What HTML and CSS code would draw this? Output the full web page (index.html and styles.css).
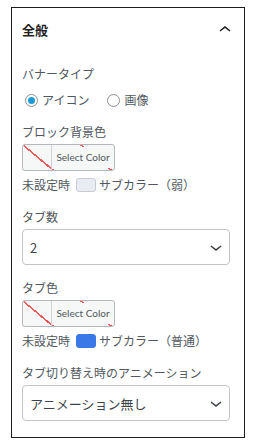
FILE: index.html
```html
<!DOCTYPE html>
<html>
<head>
    <title>全般</title>
    <link rel="stylesheet" href="styles.css">
</head>
<body>
    <div class="panel">
        <div class="panel-head">
            <span class="panel-title">全般</span>
            <svg class="chev" width="24" height="24" viewBox="0 0 24 24"><path d="M6.5 12.4L12 8l5.5 4.4-.9 1.2L12 10l-4.6 3.6z"/></svg>
        </div>

        <div class="panel-body">
            <div class="label">バナータイプ</div>
            <div class="radios">
                <label class="radio-item"><span class="radio checked"></span>アイコン</label>
                <label class="radio-item"><span class="radio"></span>画像</label>
            </div>

            <div class="label group">ブロック背景色</div>
            <button type="button" class="color-btn">
                <span class="color-swatch"></span>
                <span class="color-text">Select Color</span>
            </button>
            <div class="default-row">
                未設定時 <span class="mini-swatch light"></span> サブカラー（弱）
            </div>

            <div class="label group">タブ数</div>
            <div class="select">
                <span>2</span>
                <svg width="24" height="24" viewBox="0 0 24 24"><path d="M17.5 11.6L12 16l-5.5-4.4.9-1.2L12 14l4.6-3.6 1 1.2z"/></svg>
            </div>

            <div class="label group">タブ色</div>
            <button type="button" class="color-btn">
                <span class="color-swatch"></span>
                <span class="color-text">Select Color</span>
            </button>
            <div class="default-row">
                未設定時 <span class="mini-swatch blue"></span> サブカラー（普通）
            </div>

            <div class="label group">タブ切り替え時のアニメーション</div>
            <div class="select">
                <span>アニメーション無し</span>
                <svg width="24" height="24" viewBox="0 0 24 24"><path d="M17.5 11.6L12 16l-5.5-4.4.9-1.2L12 14l4.6-3.6 1 1.2z"/></svg>
            </div>
        </div>
    </div>
</body>
</html>
```

FILE: styles.css
```css
body {
    margin: 0;
    background: #fff;
    font-family: "Noto Sans CJK JP", "Noto Sans", sans-serif;
    font-size: 12px;
    color: #50575e;
}

.panel {
    margin: 7px 10px 0 11px;
    border: 1px solid #1e1e1e;
}

.panel-head {
    display: flex;
    align-items: center;
    justify-content: space-between;
    padding: 10px 7px 10px 10px;
}

.panel-title {
    font-size: 13px;
    font-weight: bold;
    line-height: 16px;
    color: #1e1e1e;
}

.chev {
    fill: #1e1e1e;
}

.panel-body {
    padding: 13px 14px 16px 10px;
}

.label {
    line-height: 18px;
}

.label.group {
    margin-top: 14px;
}

.radios {
    display: flex;
    margin-top: 8px;
    line-height: 18px;
}

.radio-item {
    display: flex;
    align-items: center;
    margin-right: 15px;
}

.radio {
    position: relative;
    width: 11px;
    height: 11px;
    margin: 0 4px 0 3px;
    border: 1px solid #8c8f94;
    border-radius: 50%;
}

.radio.checked::after {
    content: "";
    position: absolute;
    top: 2px;
    left: 2px;
    width: 7px;
    height: 7px;
    border-radius: 50%;
    background: #1e9bd7;
}

.color-btn {
    display: flex;
    width: 93px;
    height: 27px;
    margin-top: 3px;
    padding: 0;
    border: 1px solid #b4b7bb;
    border-radius: 3px;
    background-color: #f6f7f7;
    background-image: repeating-linear-gradient(40deg, transparent 0, transparent 18.4px, #ee5a5a 18.4px, #ee5a5a 20px, transparent 20px, transparent 37.3px);
}

.color-swatch {
    width: 28px;
    height: 100%;
    border-right: 1px solid #d0d2d4;
}

.color-text {
    flex: 1;
    margin: 2px 0;
    background: #f6f7f7;
    font-family: Lato, "Noto Sans", sans-serif;
    font-size: 10px;
    line-height: 21px;
    color: #50575e;
    text-align: center;
}

.default-row {
    display: flex;
    align-items: center;
    margin-top: 5px;
    line-height: 18px;
}

.mini-swatch {
    width: 18px;
    height: 12px;
    margin: 0 3px 0 6px;
    border: 1px solid #c8ccd4;
    border-radius: 3px;
}

.mini-swatch.light {
    background: #e9ecf3;
}

.mini-swatch.blue {
    background: #3b78e7;
    border-color: #3b78e7;
}

.select {
    display: flex;
    align-items: center;
    justify-content: space-between;
    height: 34px;
    margin-top: 3px;
    padding: 0 1px 0 7px;
    border: 1px solid #c3c4c7;
    border-radius: 4px;
    font-size: 13px;
    color: #3c434a;
}

.select svg {
    fill: #3c434a;
}
```
